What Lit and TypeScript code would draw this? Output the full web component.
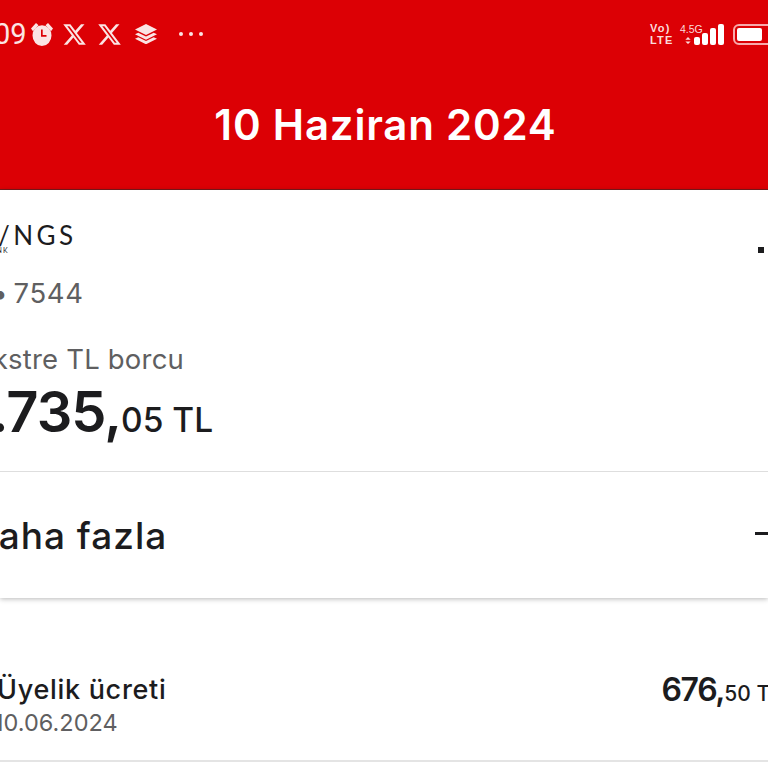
import { LitElement, css, html } from 'lit';
import { customElement } from 'lit/decorators.js';

@customElement('app-root')
export class AppRoot extends LitElement {
  static override styles = css`
    :host {
      display: block;
      width: 768px;
      height: 768px;
      overflow: hidden;
      background: #fff;
      font-family: Inter, "Noto Sans", sans-serif;
      color: #1c1c1e;
    }
    .header {
      height: 189px;
      background: #dc0005;
      border-bottom: 1px solid #7c1a1c;
      color: #fff;
      display: flex;
      flex-direction: column;
    }
    .status {
      height: 68px;
      display: flex;
      align-items: center;
      justify-content: space-between;
    }
    .status-left {
      display: flex;
      align-items: center;
      margin-left: -6px;
      color: #fbe4e4;
    }
    .time {
      font-size: 29px;
      font-weight: 400;
      width: 37px;
      font-family: Roboto, sans-serif;
    }
    .status-left svg {
      display: block;
      fill: currentColor;
    }
    .alarm { width: 22px; height: 23px; }
    .xlogo { width: 23px; height: 21px; margin-left: 12px; }
    .alarm + .xlogo { margin-left: 10px; }
    .layers { width: 22px; height: 20px; margin-left: 14px; }
    .more {
      display: flex;
      gap: 6px;
      margin-left: 22px;
    }
    .more i {
      width: 4px;
      height: 4px;
      border-radius: 50%;
      background: currentColor;
    }
    .status-right {
      display: flex;
      align-items: center;
      margin-right: -7px;
      color: #fbdcdc;
    }
    .volte {
      width: 30px;
      font: 700 11px/12px "Liberation Sans", sans-serif;
      letter-spacing: 1.2px;
      text-align: left;
    }
    .net {
      width: 14px;
      display: flex;
      flex-direction: column;
      font: 400 10.500px/11px "Liberation Sans", sans-serif;
      height: 20px;
    }
    .net span {
      white-space: nowrap;
    }
    .net svg {
      margin: 2px 0 0 5px;
      width: 6px;
      height: 8px;
      fill: currentColor;
    }
    .bars {
      display: flex;
      align-items: flex-end;
      gap: 2px;
      height: 21px;
    }
    .bars i {
      width: 6px;
      border-radius: 2px;
      background: #fff;
    }
    .battery {
      width: 42px;
      height: 21px;
      box-sizing: border-box;
      margin-left: 9px;
      border: 2px solid #f7a9ab;
      border-radius: 6px;
      padding: 2px;
    }
    .battery i {
      display: block;
      width: 25px;
      height: 13px;
      border-radius: 2px;
      background: #fff;
    }
    .title {
      margin: 32px 0 0 3px;
      font-size: 42px;
      line-height: 50px;
      font-weight: 600;
      letter-spacing: 0.8px;
      text-align: center;
    }
    .card {
      height: 408px;
      box-sizing: border-box;
      background: #fff;
      box-shadow: 0 1px 5px rgba(0, 0, 0, 0.28);
      display: flex;
      flex-direction: column;
    }
    .summary {
      height: 282px;
      box-sizing: border-box;
      padding: 28px 0 0 0;
      border-bottom: 1px solid #dedede;
    }
    .top {
      display: flex;
      justify-content: space-between;
      height: 36px;
    }
    .logo {
      margin-left: -31px;
      font-family: Lato, sans-serif;
      font-size: 26px;
      line-height: 34px;
      letter-spacing: 3.4px;
      font-weight: 400;
    }
    .bank {
      display: block;
      margin: -6px 0 0 5px;
      font-size: 7px;
      line-height: 8px;
      letter-spacing: 1px;
    }
    .dots {
      display: flex;
      gap: 6px;
      margin: 29px -20px 0 0;
    }
    .dots i {
      width: 6px;
      height: 6px;
      background: #1c1c1e;
    }
    .number {
      margin: 22px 0 0 -56px;
      font-size: 27.500px;
      line-height: 34px;
      letter-spacing: 0.6px;
      word-spacing: -3px;
      font-weight: 400;
      color: #5f5f61;
    }
    .label {
      margin: 32px 0 0 -24px;
      font-size: 27.500px;
      line-height: 34px;
      letter-spacing: 0.2px;
      font-weight: 400;
      color: #5f5f61;
    }
    .amount {
      margin: 2px 0 0 -32px;
      font-size: 56px;
      line-height: 68px;
      font-weight: 600;
      letter-spacing: -1px;
    }
    .amount small,
    .price small {
      font-weight: 500;
      letter-spacing: 0;
    }
    .amount small {
      font-size: 33.500px;
    }
    .more-row {
      flex: 1;
      display: flex;
      align-items: center;
      justify-content: space-between;
    }
    .more-label {
      margin: 0 0 0 -29px;
      font-size: 37px;
      font-weight: 500;
      letter-spacing: 1px;
    }
    .minus {
      width: 24px;
      height: 3px;
      margin: -3px -11px 0 0;
      background: #1c1c1e;
    }
    .row {
      margin-top: 64px;
      height: 100px;
      box-sizing: border-box;
      border-bottom: 2px solid #e4e4e4;
      display: flex;
      justify-content: space-between;
    }
    .row-name {
      margin: 10px 0 0 -3px;
      font-size: 27px;
      line-height: 36px;
      font-weight: 500;
      letter-spacing: 0.7px;
    }
    .row-date {
      margin: -1px 0 0 -6px;
      font-size: 23.500px;
      line-height: 32px;
      font-weight: 400;
      color: #5f5f61;
    }
    .price {
      margin: 8px -14px 0 0;
      font-size: 32px;
      line-height: 40px;
      font-weight: 600;
      letter-spacing: -1.3px;
      white-space: nowrap;
    }
    .price small {
      font-size: 21px;
    }
  `;

  xLogo() {
    return html`<svg class="xlogo" viewBox="1 2 22 20" preserveAspectRatio="none"><path d="M18.244 2.25h3.308l-7.227 8.26 8.502 11.24H16.17l-5.214-6.817L4.99 21.75H1.68l7.73-8.835L1.254 2.25H8.08l4.713 6.231zm-1.161 17.52h1.833L7.084 4.126H5.117z"/></svg>`;
  }

  override render() {
    return html`
      <div class="header">
        <div class="status">
          <div class="status-left">
            <span class="time">09</span>
            <svg class="alarm" viewBox="1 2 22 21" preserveAspectRatio="none">
              <path d="M1 7 6 2l2.5 2L3 9.500zM23 7l-5-5-2.500 2L21 9.500z"/>
              <path fill-rule="evenodd" d="M12 4a9.500 9.500 0 1 1 0 19 9.500 9.500 0 0 1 0-19zm-1 4v6.500h5.500v-1.600H12.700V8z"/>
            </svg>
            ${this.xLogo()}
            ${this.xLogo()}
            <svg class="layers" viewBox="2 1 20 22" preserveAspectRatio="none">
              <path d="M12 1 22 7l-10 6L2 7z"/>
              <path d="m5 10.500 7 4.200 7-4.200 3 1.800-10 6-10-6z"/>
              <path d="m5 15.500 7 4.200 7-4.200 3 1.800-10 6-10-6z"/>
            </svg>
            <div class="more"><i></i><i></i><i></i></div>
          </div>
          <div class="status-right">
            <div class="volte">Vo)<br />LTE</div>
            <div class="net">
              <span>4.5G</span>
              <svg viewBox="0 0 6 8"><path d="M3 0l3 3H0zM3 8 0 5h6z"/></svg>
            </div>
            <div class="bars">
              <i style="height: 8px"></i>
              <i style="height: 12px"></i>
              <i style="height: 17px"></i>
              <i style="height: 21px"></i>
            </div>
            <div class="battery"><i></i></div>
          </div>
        </div>
        <div class="title">10 Haziran 2024</div>
      </div>
      <div class="card">
        <div class="summary">
          <div class="top">
            <div class="logo">W/NGS<span class="bank">AKBANK</span></div>
            <div class="dots"><i></i><i></i><i></i></div>
          </div>
          <div class="number">•••• 7544</div>
          <div class="label">Ekstre TL borcu</div>
          <div class="amount">1.735,<small>05 TL</small></div>
        </div>
        <div class="more-row">
          <span class="more-label">Daha fazla</span>
          <span class="minus"></span>
        </div>
      </div>
      <div class="row">
        <div>
          <div class="row-name">Üyelik ücreti</div>
          <div class="row-date">10.06.2024</div>
        </div>
        <div class="price">676,<small>50 TL</small></div>
      </div>
    `;
  }
}
